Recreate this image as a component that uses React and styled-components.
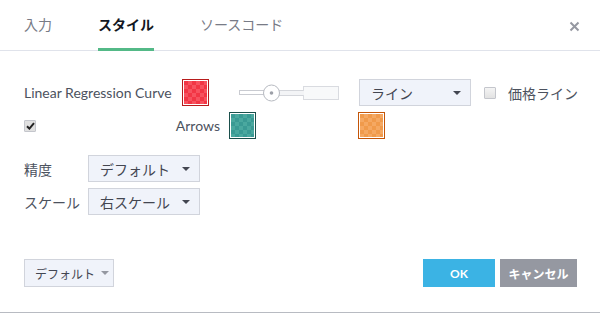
import React from 'react';
import styled, { createGlobalStyle } from 'styled-components';

const GlobalStyle = createGlobalStyle`
  html, body {
    margin: 0;
    padding: 0;
    background: #fff;
  }
  body {
    font-family: Lato, "Noto Sans CJK JP", sans-serif;
  }
`;

const Dialog = styled.div`
  width: 600px;
  height: 312px;
  background: #fff;
  border-bottom: 1px solid #b8bbc2;
  display: flex;
  flex-direction: column;
  font-family: Lato, "Noto Sans CJK JP", sans-serif;
`;

const Header = styled.div`
  height: 51px;
  box-sizing: border-box;
  border-bottom: 1px solid #e0e3eb;
  display: flex;
  align-items: stretch;
  padding-left: 24px;
  position: relative;
`;

const Tab = styled.div`
  display: flex;
  align-items: center;
  margin-right: 46px;
  padding-bottom: 4px;
  font-size: 14px;
  color: ${(p) => (p.$active ? '#131722' : '#787b86')};
  font-weight: ${(p) => (p.$active ? 700 : 400)};
  box-shadow: ${(p) => (p.$active ? 'inset 0 -3px 0 #53b987' : 'none')};
  margin-bottom: -1px;
`;

const Close = styled.div`
  position: absolute;
  right: 20px;
  top: 16px;
  width: 11px;
  height: 11px;
`;

const Body = styled.div`
  flex: 1;
  padding: 28px 24px 0;
  display: flex;
  flex-direction: column;
`;

const Row = styled.div`
  display: flex;
  align-items: center;
  height: 27px;
  margin-bottom: ${(p) => p.$gap || 0}px;
`;

const Label = styled.div`
  font-size: 14px;
  color: #4c525e;
  width: ${(p) => (p.$w ? `${p.$w}px` : 'auto')};
  flex: none;
  text-align: ${(p) => p.$align || 'left'};
  margin-left: ${(p) => p.$ml || 0}px;
  white-space: nowrap;
`;

const Swatch = styled.div`
  width: 27px;
  height: 27px;
  box-sizing: border-box;
  flex: none;
  border: 1px solid ${(p) => p.$border};
  padding: 1px;
  margin-left: ${(p) => p.$ml || 0}px;
  &::after {
    content: '';
    display: block;
    width: 100%;
    height: 100%;
    background-color: ${(p) => p.$a};
    background-image: conic-gradient(
      ${(p) => p.$b} 25%,
      transparent 0 50%,
      ${(p) => p.$b} 0 75%,
      transparent 0
    );
    background-size: 8px 8px;
  }
`;

const SliderWrap = styled.div`
  margin-left: 30px;
  width: 101px;
  height: 20px;
  flex: none;
`;

const Select = styled.div`
  box-sizing: border-box;
  width: ${(p) => p.$w}px;
  height: 27px;
  flex: none;
  margin-left: ${(p) => p.$ml || 0}px;
  background: #f0f3fa;
  border: 1px solid #d1d4dc;
  display: flex;
  align-items: center;
  justify-content: space-between;
  padding: 0 9px 0 11px;
  font-size: 14px;
  color: #434651;
  white-space: nowrap;
`;

const Caret = styled.span`
  flex: none;
  width: 0;
  height: 0;
  border-left: 4px solid transparent;
  border-right: 4px solid transparent;
  border-top: 4px solid ${(p) => p.$color || '#434651'};
  margin-left: 6px;
`;

const Check = styled.div`
  width: 12px;
  height: 12px;
  box-sizing: border-box;
  flex: none;
  border: 1px solid #c4c6cc;
  border-radius: 1px;
  background: ${(p) => (p.$on ? '#e0e0e0' : 'linear-gradient(#f4f4f4, #e2e2e2)')};
  margin-left: ${(p) => p.$ml || 0}px;
  margin-right: ${(p) => p.$mr || 0}px;
  display: flex;
  align-items: center;
  justify-content: center;
`;

const Footer = styled.div`
  display: flex;
  align-items: center;
  padding: 0 23px 25px 24px;
`;

const DefaultBtn = styled.div`
  box-sizing: border-box;
  width: 90px;
  height: 28px;
  background: #f0f3fa;
  border: 1px solid #d1d4dc;
  display: flex;
  align-items: center;
  padding: 0 0 0 10px;
  font-size: 12px;
  color: #434651;
  white-space: nowrap;
`;

const Btn = styled.div`
  box-sizing: border-box;
  width: ${(p) => p.$w}px;
  height: 28px;
  margin-left: ${(p) => p.$ml || 0}px;
  background: ${(p) => p.$bg};
  color: #fff;
  font-weight: 700;
  font-size: 12px;
  display: flex;
  align-items: center;
  justify-content: center;
`;

const Spacer = styled.div`
  flex: 1;
`;

function Slider() {
  return (
    <SliderWrap>
      <svg width="101" height="20" viewBox="0 0 101 20">
        <rect x="0.5" y="7.5" width="30" height="4" fill="#fff" stroke="#c9cbd1" />
        <rect x="38" y="7.5" width="26" height="5" fill="#f3f4f6" stroke="#d4d6db" />
        <rect x="64.5" y="3.5" width="35" height="13" fill="#f8f9fa" stroke="#d9dbe0" />
        <rect x="39" y="8" width="26" height="4" fill="#f3f4f6" />
        <circle cx="32.5" cy="10" r="8" fill="#fff" stroke="#b7bac1" strokeWidth="1" />
        <circle cx="32.5" cy="10" r="1.8" fill="#9da0a8" />
      </svg>
    </SliderWrap>
  );
}

export default function App() {
  return (
    <>
      <GlobalStyle />
      <Dialog>
        <Header>
          <Tab>入力</Tab>
          <Tab $active>スタイル</Tab>
          <Tab>ソースコード</Tab>
          <Close>
            <svg width="11" height="11" viewBox="0 0 11 11">
              <path d="M1.5 1.5 L9.5 9.5 M9.5 1.5 L1.5 9.5" stroke="#9598a1" strokeWidth="2" />
            </svg>
          </Close>
        </Header>
        <Body>
          <Row $gap={6}>
            <Label $w={158}>Linear Regression Curve</Label>
            <Swatch $border="#b71c1c" $a="#f23645" $b="#f7525f" />
            <Slider />
            <Select $w={112} $ml={19}>
              ライン
              <Caret />
            </Select>
            <Check $ml={13} $mr={12} />
            <Label>価格ライン</Label>
          </Row>
          <Row $gap={16}>
            <Check $on>
              <svg width="9" height="8" viewBox="0 0 9 8">
                <path d="M1 4.2 L3.4 6.6 L8 1.2" stroke="#222" strokeWidth="2" fill="none" />
              </svg>
            </Check>
            <Label $w={184} $align="right">Arrows</Label>
            <Swatch $ml={9} $border="#1b4f4b" $a="#3a9a94" $b="#4aa89f" />
            <Swatch $ml={102} $border="#c45508" $a="#f09a4b" $b="#f5a862" />
          </Row>
          <Row $gap={6}>
            <Label $w={64}>精度</Label>
            <Select $w={112}>
              デフォルト
              <Caret />
            </Select>
          </Row>
          <Row>
            <Label $w={64}>スケール</Label>
            <Select $w={112}>
              右スケール
              <Caret />
            </Select>
          </Row>
          <Spacer />
        </Body>
        <Footer>
          <DefaultBtn>
            デフォルト
            <Caret $color="#9598a1" />
          </DefaultBtn>
          <Spacer />
          <Btn $w={72} $bg="#3bb3e4">OK</Btn>
          <Btn $w={77} $ml={5} $bg="#9598a1">キャンセル</Btn>
        </Footer>
      </Dialog>
    </>
  );
}
